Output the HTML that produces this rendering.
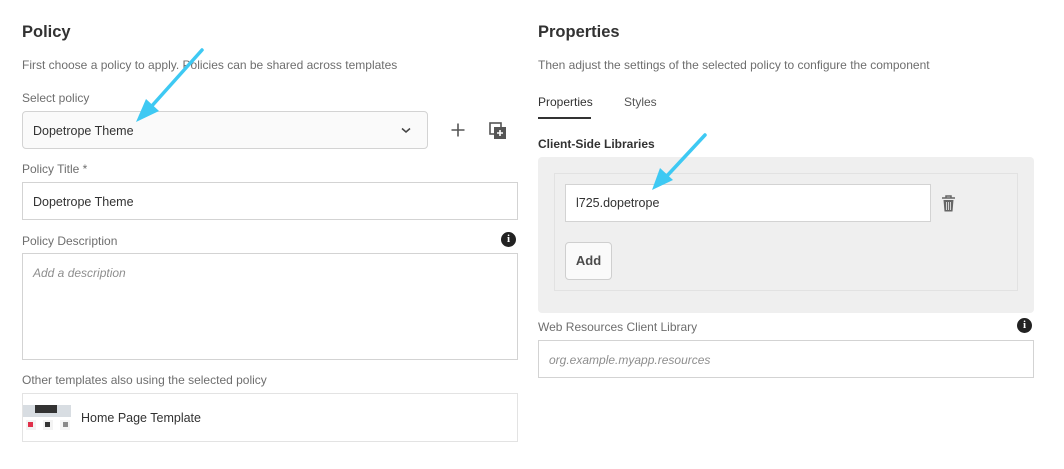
<!DOCTYPE html>
<html><head><style>
*{box-sizing:border-box;margin:0;padding:0}
body{width:1064px;height:469px;background:#fff;font-family:"Liberation Sans",sans-serif;color:#323232;position:relative;overflow:hidden}
.a{position:absolute;white-space:nowrap}
h1{position:absolute;font-size:16.5px;font-weight:bold;color:#323232}
.sub{font-size:12px;color:#6e6e6e}
.lbl{font-size:12px;color:#6e6e6e}
.box{position:absolute;border:1px solid #d3d3d3;background:#fff}
.txt{font-size:12.5px;color:#323232}
.ph{font-size:12px;color:#8e8e8e;font-style:italic}
.info{position:absolute;width:15px;height:15px;border-radius:50%;background:#222;color:#fff;font:bold 11px "Liberation Serif",serif;text-align:center;line-height:15px}
</style></head><body>
<h1 style="left:22px;top:23px">Policy</h1>
<div class="a sub" style="left:22px;top:58px">First choose a policy to apply. Policies can be shared across templates</div>
<div class="a lbl" style="left:22px;top:91px">Select policy</div>
<div class="box" style="left:22px;top:111px;width:406px;height:38px;background:#fafafa;border-radius:4px"></div>
<div class="a txt" style="left:33px;top:124px">Dopetrope Theme</div>
<svg class="a" style="left:401px;top:127px" width="10" height="7"><path d="M1 1.5 L5 5 L9 1.5" fill="none" stroke="#444" stroke-width="1.5"/></svg>
<svg class="a" style="left:451px;top:123px" width="14" height="14"><path d="M7 0.5V13.5M0.5 7H13.5" stroke="#555" stroke-width="1.6"/></svg>
<svg class="a" style="left:489px;top:122px" width="17" height="17"><rect x="1" y="1" width="11" height="11" fill="none" stroke="#555" stroke-width="1.6"/><rect x="5" y="5" width="12" height="12" fill="#555"/><path d="M11 8v6M8 11h6" stroke="#fff" stroke-width="1.6"/></svg>
<div class="a lbl" style="left:22px;top:162px">Policy Title *</div>
<div class="box" style="left:22px;top:182px;width:496px;height:38px"></div>
<div class="a txt" style="left:33px;top:195px">Dopetrope Theme</div>
<div class="a lbl" style="left:22px;top:234px">Policy Description</div>
<div class="info" style="left:501px;top:232px">i</div>
<div class="box" style="left:22px;top:253px;width:496px;height:107px"></div>
<div class="a ph" style="left:33px;top:266px">Add a description</div>
<div class="a lbl" style="left:22px;top:373px">Other templates also using the selected policy</div>
<div class="box" style="left:22px;top:393px;width:496px;height:49px;border-color:#e3e3e3"></div>
<div class="a" style="left:23px;top:394px;width:48px;height:47px;background:#fff">
 <div style="position:absolute;left:0;top:11px;width:48px;height:12px;background:#d8dde2"></div>
 <div style="position:absolute;left:12px;top:11px;width:22px;height:8px;background:#333"></div>
 <div style="position:absolute;left:3px;top:26px;width:10px;height:10px;background:#f3f3f3"></div>
 <div style="position:absolute;left:5px;top:28px;width:5px;height:5px;background:#e0304a"></div>
 <div style="position:absolute;left:20px;top:26px;width:10px;height:10px;background:#f3f3f3"></div>
 <div style="position:absolute;left:22px;top:28px;width:5px;height:5px;background:#333"></div>
 <div style="position:absolute;left:37px;top:26px;width:10px;height:10px;background:#f3f3f3"></div>
 <div style="position:absolute;left:40px;top:28px;width:5px;height:5px;background:#888"></div>
</div>
<div class="a txt" style="left:81px;top:411px">Home Page Template</div>

<h1 style="left:538px;top:23px">Properties</h1>
<div class="a sub" style="left:538px;top:58px">Then adjust the settings of the selected policy to configure the component</div>
<div class="a txt" style="left:538px;top:95px;font-size:12px">Properties</div>
<div class="a txt" style="left:624px;top:95px;font-size:12px;color:#555">Styles</div>
<div class="a" style="left:538px;top:117px;width:53px;height:2px;background:#333"></div>
<div class="a" style="left:538px;top:137px;font-size:12px;font-weight:bold;color:#323232">Client-Side Libraries</div>
<div class="a" style="left:538px;top:157px;width:496px;height:156px;background:#efefef;border-radius:4px"></div>
<div class="a" style="left:554px;top:173px;width:464px;height:118px;border:1px solid #e2e2e2"></div>
<div class="box" style="left:565px;top:184px;width:366px;height:38px"></div>
<div class="a txt" style="left:576px;top:196px">l725.dopetrope</div>
<svg class="a" style="left:941px;top:195px" width="15" height="17"><path d="M1 3h13M5 3V1h5v2" fill="none" stroke="#666" stroke-width="1.5"/><path d="M2.5 5h10l-1 11.5h-8z" fill="#666"/><path d="M5.5 7v8M7.5 7v8M9.5 7v8" stroke="#efefef" stroke-width="0.8"/></svg>
<div class="a" style="left:565px;top:242px;width:47px;height:38px;border:1px solid #cfcfcf;border-radius:4px;background:#fafafa;font-size:13px;font-weight:bold;color:#4b4b4b;text-align:center;line-height:36px">Add</div>
<div class="a lbl" style="left:538px;top:320px">Web Resources Client Library</div>
<div class="info" style="left:1017px;top:318px">i</div>
<div class="box" style="left:538px;top:340px;width:496px;height:38px"></div>
<div class="a ph" style="left:549px;top:353px">org.example.myapp.resources</div>

<svg class="a" style="left:0;top:0" width="1064" height="469">
<g stroke="#3ec9f3" stroke-width="3.5" stroke-linecap="round"><path d="M202 50L150 108"/><path d="M705 135L665 178"/></g>
<path d="M136 122L146 99L159 111Z" fill="#3ec9f3"/>
<path d="M652 190L660 168L673 180Z" fill="#3ec9f3"/>
</svg>
</body></html>
